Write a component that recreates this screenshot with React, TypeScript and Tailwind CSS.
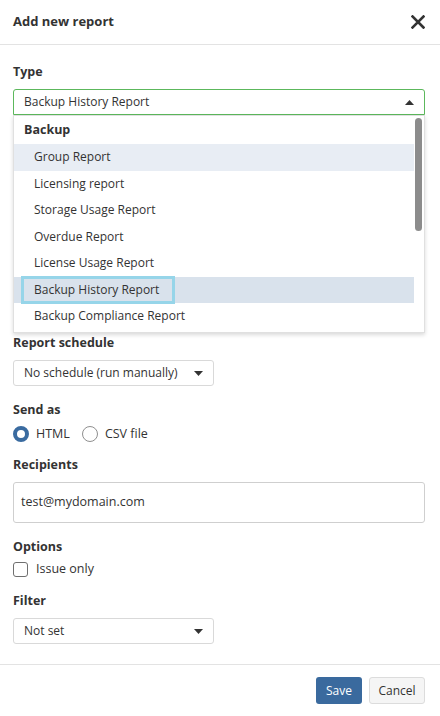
import React from 'react'

const ITEMS = [
  'Group Report',
  'Licensing report',
  'Storage Usage Report',
  'Overdue Report',
  'License Usage Report',
  'Backup History Report',
  'Backup Compliance Report',
]

function Caret({ up }: { up?: boolean }) {
  return (
    <svg width="9" height="5" viewBox="0 0 9 5" className="shrink-0">
      {up ? <path d="M0 5 L4.5 0 L9 5 Z" fill="#333" /> : <path d="M0 0 L9 0 L4.5 5 Z" fill="#333" />}
    </svg>
  )
}

function Label({ children }: { children: React.ReactNode }) {
  return <div className="h-[18px] text-[12.5px] font-bold leading-[18px] text-[#333]">{children}</div>
}

function SmallSelect({ value }: { value: string }) {
  return (
    <div className="mt-2 flex h-[26px] w-[201px] items-center justify-between rounded-[3px] border border-[#d9d9d9] bg-white pl-[10px] pr-[10px] text-[12px] text-[#333]">
      <span>{value}</span>
      <Caret />
    </div>
  )
}

export default function App() {
  return (
    <div className="h-[716px] w-[440px] bg-white text-[#333]" style={{ fontFamily: '"Open Sans", "Noto Sans", sans-serif' }}>
      {/* header */}
      <div className="flex h-[45px] items-center justify-between border-b border-[#e3e3e3] pl-[13px] pr-[15px]">
        <span className="text-[13px] font-bold">Add new report</span>
        <svg width="14" height="14" viewBox="0 0 14 14">
          <path d="M1.5 1.5 L12.5 12.5 M12.5 1.5 L1.5 12.5" stroke="#333" strokeWidth="2.6" strokeLinecap="square" />
        </svg>
      </div>

      <div className="pl-[13px] pr-[15px] pt-[18px]">
        {/* type */}
        <Label>Type</Label>
        <div className="relative mt-2">
          <div className="flex h-[26px] items-center justify-between rounded-t-[3px] border border-[#5cb85c] pl-[10px] pr-[10px] text-[12px]">
            <span>Backup History Report</span>
            <Caret up />
          </div>
          <div className="h-[219px]" />
          <div className="absolute left-0 right-0 top-[26px] border border-[#e0e0e0] bg-white shadow-[0_2px_4px_rgba(0,0,0,0.15)]">
            <div className="flex">
              <div className="flex-1">
                <div className="flex h-[28px] items-center pl-[10px] text-[12.5px] font-bold">Backup</div>
                {ITEMS.map((it, i) => (
                  <div
                    key={it}
                    className={
                      'flex h-[26.5px] items-center text-[12px] ' +
                      (i === 0 ? 'bg-[#e8edf4] pl-5' : i === 5 ? 'bg-[#d9e2ec] pl-[7px]' : 'pl-5')
                    }
                  >
                    {i === 5 ? (
                      <span className="border-[3px] border-[#96d5e9] py-[2px] pl-[10px] pr-[13px]">{it}</span>
                    ) : (
                      it
                    )}
                  </div>
                ))}
                <div className="h-[2px]" />
              </div>
              <div className="w-[10px] pt-[2px]">
                <div className="ml-[1px] h-[113px] w-[7px] rounded-[4px] bg-[#8c8c8c]" />
              </div>
            </div>
          </div>
        </div>

        {/* schedule */}
        <div>
          <Label>Report schedule</Label>
          <SmallSelect value="No schedule (run manually)" />
        </div>

        {/* send as */}
        <div className="mt-[15px]">
          <Label>Send as</Label>
          <div className="mt-[7px] flex h-4 items-center text-[12.5px]">
            <span className="h-4 w-4 rounded-full border-[4px] border-[#3a6ba0] bg-white" />
            <span className="ml-[7px]">HTML</span>
            <span className="ml-[12px] h-[16px] w-[16px] rounded-full border border-[#8f8f8f] bg-white" />
            <span className="ml-[7px]">CSV file</span>
          </div>
        </div>

        {/* recipients */}
        <div className="mt-[14px]">
          <Label>Recipients</Label>
          <div className="mt-2 flex h-[41px] items-center rounded-[3px] border border-[#cfcfcf] pl-[7px] text-[12.5px]">
            test@mydomain.com
          </div>
        </div>

        {/* options */}
        <div className="mt-[15px]">
          <Label>Options</Label>
          <div className="mt-[5px] flex h-4 items-center text-[12.5px]">
            <span className="h-[15px] w-[15px] rounded-[3px] border border-[#6f6f6f] bg-white" />
            <span className="ml-[8px]">Issue only</span>
          </div>
        </div>

        {/* filter */}
        <div className="mt-[15px]">
          <Label>Filter</Label>
          <SmallSelect value="Not set" />
        </div>
      </div>

      {/* footer */}
      <div className="mt-[20px] flex justify-end gap-[7px] border-t border-[#e3e3e3] pl-[14px] pr-[15px] pt-[12px]">
        <button className="h-[27px] w-[46px] rounded-[3px] bg-[#3a6a9e] text-[12px] text-white">Save</button>
        <button className="h-[27px] w-[56px] rounded-[3px] border border-[#dcdcdc] bg-[#f5f5f5] text-[12px] text-[#333]">
          Cancel
        </button>
      </div>
    </div>
  )
}
